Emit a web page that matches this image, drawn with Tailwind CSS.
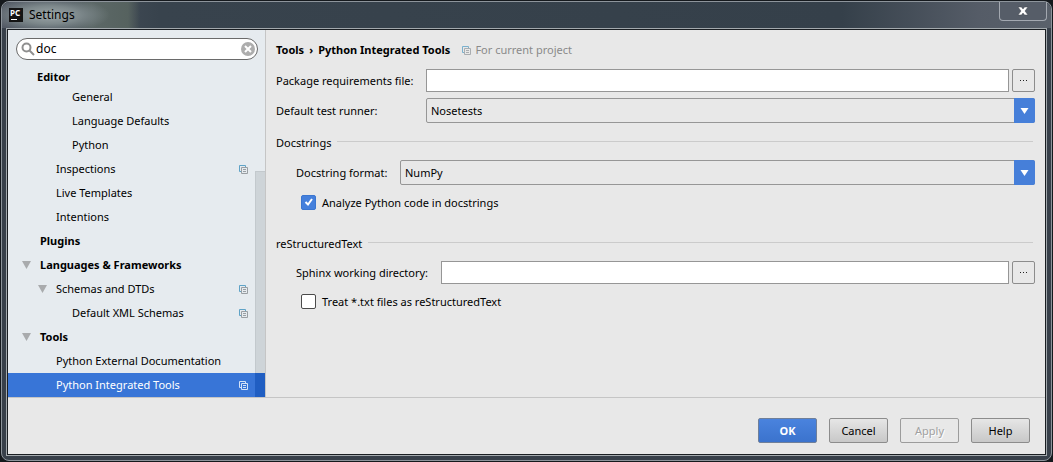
<!DOCTYPE html>
<html lang="en">
  <head>
    <meta charset="UTF-8" />
    <title>Settings</title>
    <meta name="viewport" content="width=device-width, initial-scale=1.0" />
    <script src="https://cdn.jsdelivr.net/npm/@tailwindcss/browser@4"></script>
  </head>
  <body class="bg-[#15191d] p-px font-['Noto_Sans','Open_Sans',sans-serif] text-[11px] leading-4 text-black">
    <svg class="hidden">
      <symbol id="copy" viewBox="0 0 9 9">
        <path d="M2 6.5H.5V.5H6.5V2" fill="none" stroke="var(--back, #5fa3c7)" />
        <path d="M2.5 2.5h6v6h-6zM4 4.5h3M4 6.5h3" fill="none" stroke="var(--front, #9a9fa3)" />
      </symbol>
      <symbol id="arrow" viewBox="0 0 9 8">
        <path d="M0 0h9L4.5 8z" fill="currentColor" />
      </symbol>
    </svg>

    <div class="flex h-[calc(100vh-2px)] flex-col rounded-lg border border-[#8d949b] bg-[#38404a] px-1 pb-1">
      <!-- Title bar -->
      <header class="-mx-1 flex h-[26px] shrink-0 items-center rounded-t-lg bg-[linear-gradient(90deg,#545b66_0%,#38434d_15%,#35404a_80%,#555c67_93%,#5a616b_100%)] pr-1">
        <div class="flex h-full w-[150px] items-center bg-[radial-gradient(ellipse_60px_18px_at_48px_13px,#9da6a8,#7d888b_50%,transparent),linear-gradient(90deg,transparent_40%,#5c6867_60%,#56625f_84%,transparent_92%)] pl-[7px]">
          <svg class="size-3.5" viewBox="0 0 14 14">
            <rect width="14" height="14" fill="#141414" />
            <text x="1" y="8" font-size="8" font-weight="bold" fill="#fff">PC</text>
            <path d="M2 11.5h6" stroke="#fff" />
          </svg>
          <h1 class="ml-1.5 text-[12px]">Settings</h1>
        </div>
        <button aria-label="Close" class="ml-auto flex h-[19px] w-12 items-center justify-center self-start rounded-b border border-t-0 border-[#a3a8b0] bg-[#565d68]">
          <svg class="h-2.5 w-3" viewBox="0 0 12 10">
            <path d="M1 1h3.500l1.500 2 1.500-2H11L8 5l3 4H7.500L6 7 4.500 9H1l3-4z" fill="#fff" stroke="#40464f" stroke-width=".5" />
          </svg>
        </button>
      </header>

      <div class="flex flex-1 border border-[#a3a9ad]">
        <div class="flex flex-1 flex-col border border-[#1a1e22] bg-[#e8e8e8]">
          <div class="flex">
            <!-- Tree -->
            <aside class="relative w-[258px] shrink-0 border-r border-[#c5c5c5] bg-[#e6ebef]">
              <label class="mt-2 mr-[7px] ml-2 flex h-[22px] items-center rounded-full border border-[#6a6a6a] bg-white pr-0.5 pl-1">
                <svg class="size-3.5" viewBox="0 0 14 14" fill="none" stroke="#8f8f8f" stroke-width="2">
                  <circle cx="5.500" cy="5.500" r="4" />
                  <path d="M8.500 8.500l4.500 4.500" />
                </svg>
                <input type="text" value="doc" aria-label="Search" class="ml-px min-w-0 flex-1 text-[12px] outline-none" />
                <button aria-label="Clear">
                  <svg class="block size-3.5" viewBox="0 0 14 14">
                    <circle cx="7" cy="7" r="7" fill="#adadad" />
                    <path d="M4 4l6 6M10 4l-6 6" stroke="#fff" stroke-width="2" />
                  </svg>
                </button>
              </label>

              <ul class="mt-1.5">
                <li class="flex h-[19px] items-end pl-[29px] font-bold">Editor</li>
                <li class="flex h-6 items-center pl-16">General</li>
                <li class="flex h-6 items-center pl-16">Language Defaults</li>
                <li class="flex h-6 items-center pl-16">Python</li>
                <li class="flex h-6 items-center justify-between pr-[17px] pl-12">
                  Inspections <svg class="size-[9px]"><use href="#copy" /></svg>
                </li>
                <li class="flex h-6 items-center pl-12">Live Templates</li>
                <li class="flex h-6 items-center pl-12">Intentions</li>
                <li class="flex h-6 items-center pl-8 font-bold">Plugins</li>
                <li class="flex h-6 items-center gap-[9px] pl-3.5 font-bold">
                  <svg class="h-2 w-[9px] text-[#a9abad]"><use href="#arrow" /></svg> Languages &amp; Frameworks
                </li>
                <li class="flex h-6 items-center gap-[9px] pr-[17px] pl-[30px]">
                  <svg class="h-2 w-[9px] text-[#a9abad]"><use href="#arrow" /></svg> Schemas and DTDs
                  <svg class="ml-auto size-[9px]"><use href="#copy" /></svg>
                </li>
                <li class="flex h-6 items-center justify-between pr-[17px] pl-16">
                  Default XML Schemas <svg class="size-[9px]"><use href="#copy" /></svg>
                </li>
                <li class="flex h-6 items-center gap-[9px] pl-3.5 font-bold">
                  <svg class="h-2 w-[9px] text-[#a9abad]"><use href="#arrow" /></svg> Tools
                </li>
                <li class="flex h-6 items-center pl-12">Python External Documentation</li>
                <li class="flex h-6 items-center justify-between bg-[#3875d7] pr-[17px] pl-12 text-white [--back:#d5e2f6] [--front:#d5e2f6]">
                  Python Integrated Tools <svg class="size-[9px]"><use href="#copy" /></svg>
                </li>
              </ul>
              <!-- Scrollbar thumb -->
              <div class="absolute right-0 bottom-0 flex h-[226px] w-2.5 flex-col justify-end border-t border-l border-[#c3c9cd] bg-[#ced4d8]">
                <div class="-ml-px h-6 bg-[#205ec2]"></div>
              </div>
            </aside>

            <!-- Options -->
            <main class="flex-1 px-2.5 pt-3">
              <div class="flex items-center">
                <h2 class="flex gap-[5px] font-bold"><span>Tools</span><span>›</span><span>Python Integrated Tools</span></h2>
                <svg class="ml-3 size-[9px] opacity-80"><use href="#copy" /></svg>
                <span class="ml-1 text-[#8a8a8a]">For current project</span>
              </div>

              <div class="mt-[11px] flex h-[23px] items-center">
                <label for="requirements" class="w-[150px]">Package requirements file:</label>
                <input id="requirements" type="text" class="h-full min-w-0 flex-1 border border-[#969696] bg-white px-1 outline-none" />
                <button aria-label="Browse requirements file" class="ml-[3px] flex h-full w-[23px] items-center justify-center rounded-xs border border-[#8c8c8c]">
                  <svg class="h-px w-[7px]" viewBox="0 0 7 1"><path d="M0 .5h1M3 .5h1M6 .5h1" stroke="#222" /></svg>
                </button>
              </div>

              <div class="mt-1.5 flex h-[25px] items-center">
                <label for="runner" class="w-[150px]">Default test runner:</label>
                <div class="relative h-full flex-1">
                  <select id="runner" class="block h-full w-full appearance-none rounded-xs border border-[#969696] px-1 outline-none">
                    <option>Nosetests</option>
                  </select>
                  <span class="pointer-events-none absolute inset-y-0 right-0 flex w-[21px] items-center justify-center rounded-r-xs bg-[#467fd9] text-white">
                    <svg class="h-1.5 w-[9px]" viewBox="0 0 9 6"><path d="M.5 0h8l-4 6z" fill="currentColor" /></svg>
                  </span>
                </div>
              </div>

              <fieldset class="mt-3">
                <div class="flex items-center gap-1.5">
                  <span>Docstrings</span>
                  <hr class="mr-0.5 mb-[3px] flex-1 border-[#cbcbcb]" />
                </div>
                <div class="mt-[9px] ml-5 flex h-[25px] items-center">
                  <label for="format" class="w-[104px]">Docstring format:</label>
                  <div class="relative h-full flex-1">
                    <select id="format" class="block h-full w-full appearance-none rounded-xs border border-[#969696] px-1 outline-none">
                      <option>NumPy</option>
                    </select>
                    <span class="pointer-events-none absolute inset-y-0 right-0 flex w-[21px] items-center justify-center rounded-r-xs bg-[#467fd9] text-white">
                      <svg class="h-1.5 w-[9px]" viewBox="0 0 9 6"><path d="M.5 0h8l-4 6z" fill="currentColor" /></svg>
                    </span>
                  </div>
                </div>
                <label class="mt-2.5 ml-[25px] flex gap-1.5">
                  <span class="grid size-[15px]">
                    <input type="checkbox" checked class="peer col-start-1 row-start-1 appearance-none rounded-xs border border-[#4a4a4a] bg-white checked:border-[#3b76d0] checked:bg-[#4580dc]" />
                    <svg class="pointer-events-none invisible col-start-1 row-start-1 size-[15px] peer-checked:visible" viewBox="0 0 15 15">
                      <path d="M4.500 7l2.500 2.500 4-5.500" fill="none" stroke="#fff" stroke-width="2" />
                    </svg>
                  </span>
                  Analyze Python code in docstrings
                </label>
              </fieldset>

              <fieldset class="mt-[25px]">
                <div class="flex items-center gap-1.5">
                  <span>reStructuredText</span>
                  <hr class="mr-0.5 mb-[3px] flex-1 border-[#cbcbcb]" />
                </div>
                <div class="mt-[9px] ml-5 flex h-[23px] items-center">
                  <label for="sphinx" class="w-[145px]">Sphinx working directory:</label>
                  <input id="sphinx" type="text" class="h-full min-w-0 flex-1 border border-[#969696] bg-white px-1 outline-none" />
                  <button aria-label="Browse working directory" class="ml-[3px] flex h-full w-[23px] items-center justify-center rounded-xs border border-[#8c8c8c]">
                    <svg class="h-px w-[7px]" viewBox="0 0 7 1"><path d="M0 .5h1M3 .5h1M6 .5h1" stroke="#222" /></svg>
                  </button>
                </div>
                <label class="mt-2.5 ml-[25px] flex gap-1.5">
                  <input type="checkbox" class="size-[15px] appearance-none rounded-xs border border-[#4a4a4a] bg-white checked:bg-[#4580dc]" />
                  Treat *.txt files as reStructuredText
                </label>
              </fieldset>
            </main>
          </div>

          <footer class="flex flex-1 items-start justify-end gap-3 border-t border-[#c5c5c5] pt-5 pr-[15px]">
            <button class="h-[25px] w-[59px] rounded-xs border border-[#6f7f99] bg-linear-to-b from-[#4a83de] to-[#3b73cd] font-bold text-white">OK</button>
            <button class="h-[25px] w-[59px] rounded-xs border border-[#8c8c8c] bg-linear-to-b from-[#e6e6e6] to-[#c8c8c8]">Cancel</button>
            <button disabled class="h-[25px] w-[59px] rounded-xs border border-[#9c9c9c] text-[#a0a0a0] text-shadow-[1px_1px_0_#fff]">Apply</button>
            <button class="h-[25px] w-[59px] rounded-xs border border-[#8c8c8c] bg-linear-to-b from-[#e6e6e6] to-[#c8c8c8]">Help</button>
          </footer>
        </div>
      </div>
    </div>
  </body>
</html>
